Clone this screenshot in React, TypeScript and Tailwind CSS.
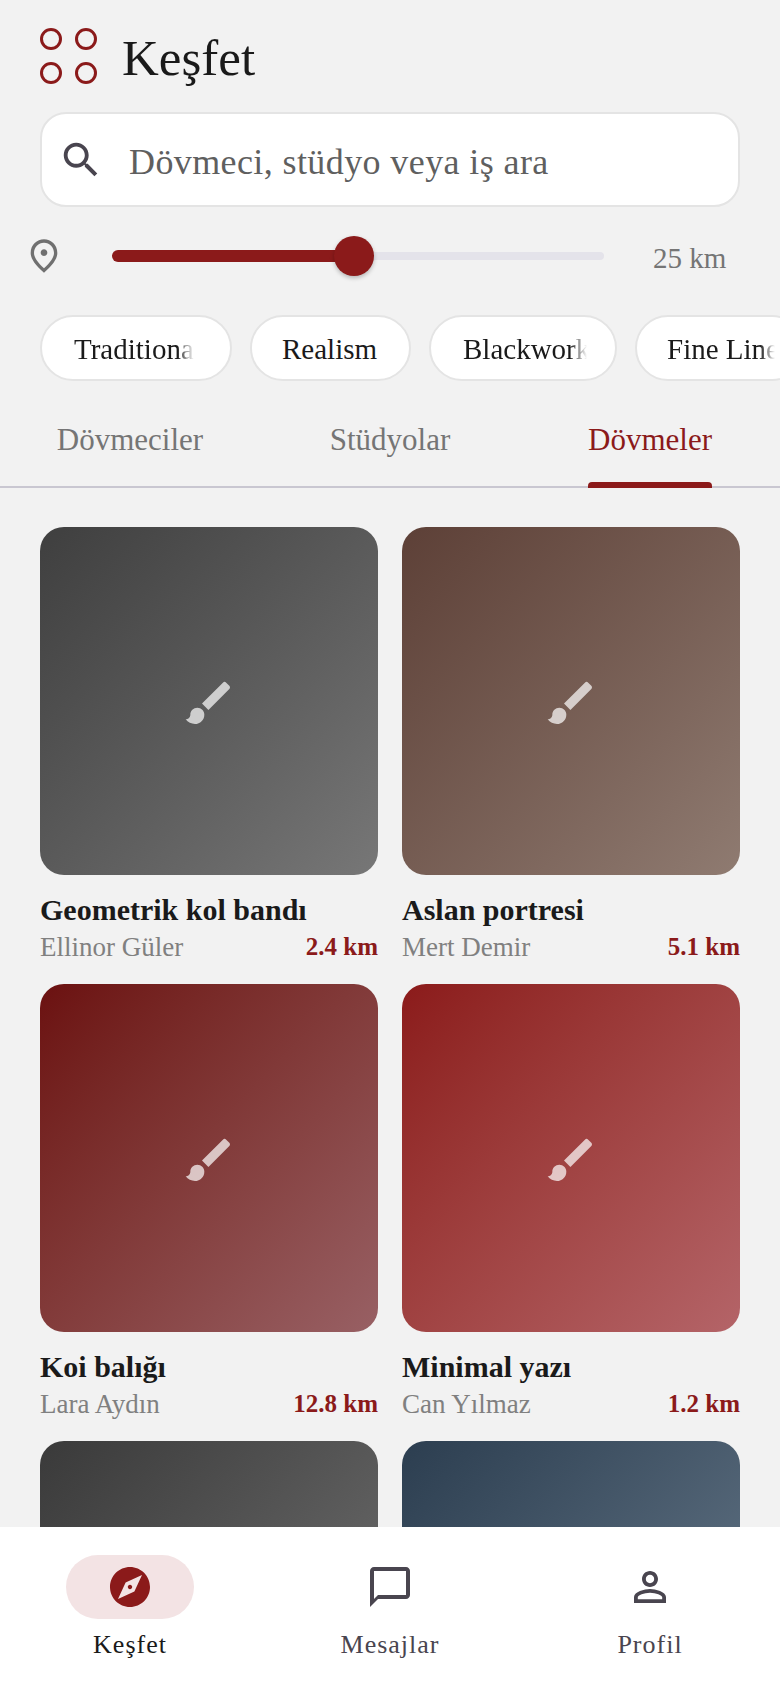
import React from "react";

const font = { fontFamily: '"Liberation Serif", serif' };

function Glyph({ d, className, fill = "currentColor" }: { d: string; className?: string; fill?: string }) {
  return (
    <svg viewBox="0 0 24 24" className={className} fill={fill} aria-hidden="true">
      <path d={d} />
    </svg>
  );
}

const BRUSH =
  "M7 14c-1.66 0-3 1.34-3 3 0 1.31-1.16 2-2 2 .92 1.22 2.49 2 4 2 2.21 0 4-1.79 4-4 0-1.66-1.34-3-3-3zm13.71-9.37l-1.34-1.34a.9959.9959 0 0 0-1.41 0L9 12.25 11.75 15l8.96-8.96c.39-.39.39-1.02 0-1.41z";
const SEARCH =
  "M15.5 14h-.79l-.28-.27C15.41 12.59 16 11.11 16 9.5 16 5.91 13.09 3 9.5 3S3 5.91 3 9.5 5.91 16 9.5 16c1.61 0 3.09-.59 4.23-1.57l.27.28v.79l5 4.99L20.49 19l-4.99-5zm-6 0C7.01 14 5 11.99 5 9.5S7.01 5 9.5 5 14 7.01 14 9.5 11.99 14 9.5 14z";
const PIN =
  "M12 12c-1.1 0-2-.9-2-2s.9-2 2-2 2 .9 2 2-.9 2-2 2zm6-1.8C18 6.57 15.35 4 12 4s-6 2.57-6 6.2c0 2.34 1.95 5.44 6 9.14 4.05-3.7 6-6.8 6-9.14zM12 2c4.2 0 8 3.22 8 8.2 0 3.32-2.67 7.25-8 11.8-5.33-4.55-8-8.48-8-11.8C4 5.22 7.8 2 12 2z";
const COMPASS =
  "M12 10.9c-.61 0-1.1.49-1.1 1.1s.49 1.1 1.1 1.1c.61 0 1.1-.49 1.1-1.1s-.49-1.1-1.1-1.1zM12 2C6.48 2 2 6.48 2 12s4.48 10 10 10 10-4.48 10-10S17.52 2 12 2zm2.19 12.19L6 18l3.81-8.19L18 6l-3.81 8.19z";
const CHAT =
  "M20 2H4c-1.1 0-2 .9-2 2v18l4-4h14c1.1 0 2-.9 2-2V4c0-1.1-.9-2-2-2zm0 14H6l-2 2V4h16v12z";
const PERSON =
  "M12 5.9c1.16 0 2.1.94 2.1 2.1s-.94 2.1-2.1 2.1S9.9 9.16 9.9 8s.94-2.1 2.1-2.1m0 9c2.97 0 6.1 1.46 6.1 2.1v1.1H5.9V17c0-.64 3.13-2.1 6.1-2.1M12 4C9.79 4 8 5.79 8 8s1.79 4 4 4 4-1.79 4-4-1.79-4-4-4zm0 9c-2.67 0-8 1.34-8 4v3h16v-3c0-2.66-5.33-4-8-4z";

const chips = [
  { label: "Traditional", box: "w-[192px] pl-[32px] pr-[36px]", fade: true },
  { label: "Realism", box: "w-[161px] pl-[30px] pr-[28px]", fade: false },
  { label: "Blackwork", box: "w-[188px] pl-[32px] pr-[28px]", fade: true },
  { label: "Fine Line", box: "w-[170px] pl-[30px] pr-[28px]", fade: true },
];

const cards = [
  { title: "Geometrik kol bandı", by: "Ellinor Güler", km: "2.4 km", bg: "bg-gradient-to-br from-[#3f3f3f] to-[#777777]" },
  { title: "Aslan portresi", by: "Mert Demir", km: "5.1 km", bg: "bg-gradient-to-br from-[#5d4037] to-[#8f7b71]" },
  { title: "Koi balığı", by: "Lara Aydın", km: "12.8 km", bg: "bg-gradient-to-br from-[#6b1010] to-[#986064]" },
  { title: "Minimal yazı", by: "Can Yılmaz", km: "1.2 km", bg: "bg-gradient-to-br from-[#8b1a1a] to-[#b46468]" },
  { title: "Siyah desen", by: "Deniz Kaya", km: "3.6 km", bg: "bg-gradient-to-br from-[#3a3a3a] to-[#777777]" },
  { title: "Dalga", by: "Ece Şahin", km: "7.3 km", bg: "bg-gradient-to-br from-[#2c3e50] to-[#6d7f90]" },
];

function Card({ title, by, km, bg }: (typeof cards)[number]) {
  return (
    <div className="flex flex-col">
      <div className={`h-[348px] pt-[3px] rounded-[24px] flex items-center justify-center ${bg}`}>
        <Glyph d={BRUSH} className="w-[56px] h-[56px] text-white/70" />
      </div>
      <div className="mt-[14px] text-[30px] leading-[42px] font-bold text-[#1a1a1a] whitespace-nowrap">{title}</div>
      <div className="flex items-center justify-between h-[32px]">
        <span className="text-[27px] text-[#808080]">{by}</span>
        <span className="text-[25px] font-bold text-[#8b1a1a]">{km}</span>
      </div>
    </div>
  );
}

export default function App() {
  return (
    <div style={font} className="w-[780px] h-[1688px] bg-[#f2f2f2] flex flex-col overflow-hidden">
      {/* header */}
      <header className="flex items-center pl-[40px] pt-[28px] h-[84px] shrink-0">
        <div className="grid grid-cols-2 gap-x-[13px] gap-y-[12px] w-[56px]">
          {[0, 1, 2, 3].map((i) => (
            <span key={i} className="w-[22px] h-[22px] rounded-full border-[3px] border-[#8b1a1a]" />
          ))}
        </div>
        <h1 className="ml-[26px] mt-[4px] text-[51px] leading-none text-[#1a1a1a]">Keşfet</h1>
      </header>

      {/* search */}
      <div className="mx-[40px] mt-[28px] h-[95px] shrink-0 rounded-[26px] bg-white border-2 border-[#e4e4e4] flex items-center pl-[16px]">
        <Glyph d={SEARCH} className="w-[46px] h-[46px] text-[#49454f]" />
        <span className="ml-[25px] mt-[4px] text-[36px] text-[#5f5f5f] tracking-[0.4px]">Dövmeci, stüdyo veya iş ara</span>
      </div>

      {/* distance slider */}
      <div className="flex items-center h-[40px] mt-[29px] shrink-0 pl-[24px]">
        <Glyph d={PIN} className="w-[40px] h-[40px] text-[#707070]" />
        <div className="ml-[48px] w-[492px] h-[40px] flex items-center relative">
          <div className="w-[230px] h-[12px] rounded-full bg-[#8b1a1a]" />
          <div className="flex-1 h-[8px] rounded-r-full bg-[#e4e3ea]" />
          <div className="absolute left-[222px] top-0 w-[40px] h-[40px] rounded-full bg-[#8b1a1a] shadow-[0_2px_4px_rgba(0,0,0,0.25)]" />
        </div>
        <span className="ml-[49px] text-[29px] text-[#757575] mt-[6px]">25 km</span>
      </div>

      {/* style chips */}
      <div className="flex gap-[18px] pl-[40px] mt-[39px] shrink-0 w-[780px] overflow-hidden">
        {chips.map((c) => (
          <div
            key={c.label}
            className={`${c.box} h-[66px] shrink-0 rounded-full bg-white border-2 border-[#e4e4e4] pt-[4px] flex items-center`}
          >
            <span
              className={
                c.fade
                  ? "block w-full overflow-hidden whitespace-nowrap text-[29px] text-[#1a1a1a] [mask-image:linear-gradient(to_right,black_86%,transparent)]"
                  : "block w-full whitespace-nowrap text-[29px] text-[#1a1a1a]"
              }
            >
              {c.label}
            </span>
          </div>
        ))}
      </div>

      {/* tabs */}
      <nav className="grid grid-cols-3 h-[107px] shrink-0 border-b-2 border-[#c9c7d1]">
        {["Dövmeciler", "Stüdyolar", "Dövmeler"].map((t, i) => (
          <div key={t} className="flex flex-col items-center">
            <div className={`relative h-full pt-[39px] text-[31px] leading-[40px] ${i === 2 ? "text-[#8b1a1a]" : "text-[#757575]"}`}>
              {t}
              {i === 2 && (
                <span className="absolute left-0 right-0 bottom-[-2px] h-[6px] rounded-t-[4px] bg-[#8b1a1a]" />
              )}
            </div>
          </div>
        ))}
      </nav>

      {/* results */}
      <main className="flex-1 min-h-0 overflow-hidden px-[40px] pt-[39px]">
        <div className="grid grid-cols-2 gap-x-[24px] gap-y-[21px]">
          {cards.map((c) => (
            <Card key={c.title} {...c} />
          ))}
        </div>
      </main>

      {/* bottom navigation */}
      <footer className="h-[161px] shrink-0 bg-white grid grid-cols-3 pt-[28px]">
        <div className="flex flex-col items-center">
          <div className="w-[128px] h-[64px] rounded-full bg-[#f3e3e4] flex items-center justify-center">
            <Glyph d={COMPASS} className="w-[48px] h-[48px] text-[#8b1a1a]" />
          </div>
          <span className="mt-[6px] text-[26px] leading-[40px] tracking-[1px] text-[#1a1a1a]">Keşfet</span>
        </div>
        <div className="flex flex-col items-center">
          <div className="w-[128px] h-[64px] flex items-center justify-center">
            <Glyph d={CHAT} className="w-[48px] h-[48px] text-[#49454f]" />
          </div>
          <span className="mt-[6px] text-[26px] leading-[40px] tracking-[1px] text-[#49454f]">Mesajlar</span>
        </div>
        <div className="flex flex-col items-center">
          <div className="w-[128px] h-[64px] flex items-center justify-center">
            <Glyph d={PERSON} className="w-[48px] h-[48px] text-[#49454f]" />
          </div>
          <span className="mt-[6px] text-[26px] leading-[40px] tracking-[1px] text-[#49454f]">Profil</span>
        </div>
      </footer>
    </div>
  );
}
